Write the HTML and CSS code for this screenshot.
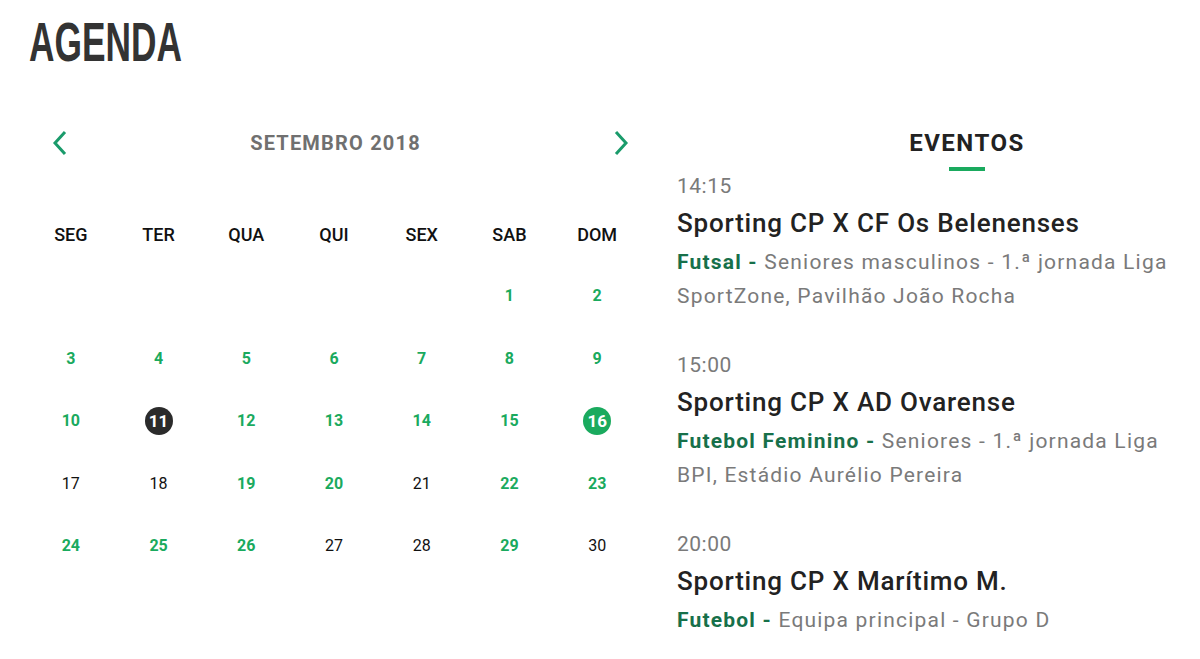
FILE: index.html
```html
<!DOCTYPE html>
<html lang="pt">
<head>
  <meta charset="UTF-8" />
  <title>Agenda</title>
  <link rel="stylesheet" href="styles.css">
</head>
<body>
  <main class="agenda">
    <h1 class="page-title">AGENDA</h1>

    <div class="content">
      <section class="calendar">
        <div class="cal-nav">
          <button class="cal-arrow" aria-label="Anterior">
            <svg width="16" height="26" viewBox="0 0 16 26"><path d="M13 2 L3 13 L13 24" fill="none" stroke="#1a9b6b" stroke-width="3"/></svg>
          </button>
          <div class="cal-month">SETEMBRO 2018</div>
          <button class="cal-arrow" aria-label="Seguinte">
            <svg width="16" height="26" viewBox="0 0 16 26"><path d="M3 2 L13 13 L3 24" fill="none" stroke="#1a9b6b" stroke-width="3"/></svg>
          </button>
        </div>

        <div class="weekdays">
          <span>SEG</span><span>TER</span><span>QUA</span><span>QUI</span><span>SEX</span><span>SAB</span><span>DOM</span>
        </div>

        <div class="days">
          <span></span><span></span><span></span><span></span><span></span>
          <span class="ev">1</span><span class="ev">2</span>
          <span class="ev">3</span><span class="ev">4</span><span class="ev">5</span><span class="ev">6</span><span class="ev">7</span><span class="ev">8</span><span class="ev">9</span>
          <span class="ev">10</span><span class="today"><b>11</b></span><span class="ev">12</span><span class="ev">13</span><span class="ev">14</span><span class="ev">15</span><span class="selected"><b>16</b></span>
          <span>17</span><span>18</span><span class="ev">19</span><span class="ev">20</span><span>21</span><span class="ev">22</span><span class="ev">23</span>
          <span class="ev">24</span><span class="ev">25</span><span class="ev">26</span><span>27</span><span>28</span><span class="ev">29</span><span>30</span>
        </div>
      </section>

      <section class="events">
        <h2 class="events-title">EVENTOS</h2>

        <article class="event">
          <div class="event-time">14:15</div>
          <h3 class="event-name">Sporting CP X CF Os Belenenses</h3>
          <p class="event-info"><strong>Futsal -</strong> Seniores masculinos - 1.ª jornada Liga SportZone, Pavilhão João Rocha</p>
        </article>

        <article class="event">
          <div class="event-time">15:00</div>
          <h3 class="event-name">Sporting CP X AD Ovarense</h3>
          <p class="event-info"><strong>Futebol Feminino -</strong> Seniores - 1.ª jornada Liga BPI, Estádio Aurélio Pereira</p>
        </article>

        <article class="event">
          <div class="event-time">20:00</div>
          <h3 class="event-name">Sporting CP X Marítimo M.</h3>
          <p class="event-info"><strong>Futebol -</strong> Equipa principal - Grupo D</p>
        </article>
      </section>
    </div>
  </main>
</body>
</html>
```

FILE: styles.css
```css
* { margin: 0; padding: 0; box-sizing: border-box; }
html, body { overflow: hidden; }
body {
  font-family: Roboto, 'Noto Sans', sans-serif;
  background-color: #fff;
  color: #222;
}

.agenda {
  padding: 14px 0 0 27px;
}
.page-title {
  font-family: 'Liberation Sans', sans-serif;
  font-size: 56px;
  line-height: 56px;
  font-weight: bold;
  color: #333;
  transform: scaleX(0.63);
  transform-origin: left center;
  margin-left: 2px;
}

.content {
  display: flex;
  margin-top: 58px;
}

/* calendar */
.calendar {
  width: 614px;
  flex-shrink: 0;
}
.cal-nav {
  display: flex;
  align-items: center;
  justify-content: space-between;
  padding: 0 12px 0 25px;
  height: 30px;
}
.cal-arrow {
  background: none;
  border: none;
  cursor: pointer;
  display: flex;
}
.cal-month {
  font-size: 20px;
  font-weight: bold;
  color: #707070;
  letter-spacing: 1.2px;
  margin-right: 10px;
}

.weekdays, .days {
  display: grid;
  grid-template-columns: repeat(7, 1fr);
  text-align: center;
}
.weekdays {
  margin-top: 66px;
  font-size: 18px;
  font-weight: 500;
  color: #111;
}
.days {
  margin-top: 41px;
  grid-auto-rows: 62.5px;
  font-size: 16px;
  color: #111;
}
.days span {
  display: flex;
  justify-content: center;
  align-items: flex-start;
}
.days .ev {
  color: #1aaa5e;
  font-weight: bold;
}
.days .today b,
.days .selected b {
  display: flex;
  align-items: center;
  justify-content: center;
  width: 28px;
  height: 28px;
  margin-top: -4px;
  border-radius: 50%;
  color: #fff;
  font-size: 17px;
}
.days .today b { background-color: #2b2b2b; }
.days .selected b { background-color: #1aaa5e; }

/* events */
.events {
  margin-left: 36px;
  width: 500px;
  flex-shrink: 0;
}
.events-title {
  text-align: center;
  padding-left: 80px;
  font-size: 24px;
  font-weight: bold;
  color: #222;
  line-height: 30px;
  letter-spacing: 1.5px;
}
.events-title::after {
  content: "";
  display: block;
  width: 36px;
  height: 4px;
  background-color: #1aaa5e;
  margin: 9px auto 0;
}
.event {
  margin-bottom: 37px;
}
.event-time {
  font-size: 21px;
  letter-spacing: 0.5px;
  color: #7a7a7a;
  line-height: 30px;
}
.event-name {
  font-size: 26px;
  font-weight: 500;
  letter-spacing: 0.8px;
  color: #222;
  line-height: 44px;
}
.event-info {
  font-size: 21px;
  letter-spacing: 1.2px;
  line-height: 34px;
  color: #7a7a7a;
}
.event-info strong {
  color: #17704a;
}
```
